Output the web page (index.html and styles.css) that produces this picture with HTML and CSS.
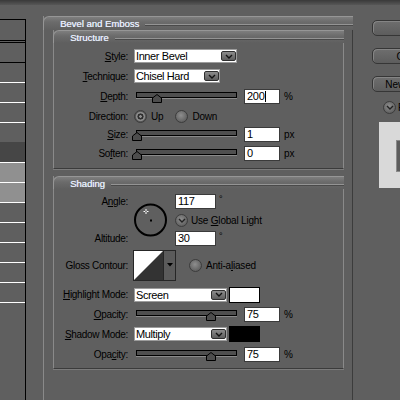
FILE: index.html
```html
<!DOCTYPE html>
<html lang="en">
<head>
    <meta charset="UTF-8">
    <title>Layer Style</title>
    <link rel="stylesheet" href="styles.css">
</head>
<body>
    <div class="topbar"></div>
    <div class="workspace">
        <ul class="layers">
            <li class="first"></li>
            <li class="dark"></li>
            <li></li>
            <li></li>
            <li></li>
            <li class="pre"></li>
            <li class="active"></li>
            <li class="picked"></li>
            <li class="picked"></li>
            <li></li>
            <li></li>
            <li></li>
            <li></li>
            <li></li>
        </ul>

        <div class="dialog">
            <section class="group outer">
                <div class="group-head"><span>Bevel and Emboss</span></div>
                <div class="group-body">

                    <section class="group">
                        <div class="group-head"><span>Structure</span></div>
                        <div class="form structure-form">
                            <label class="lbl"><u>S</u>tyle:</label>
                            <div class="ctl">
                                <div class="select long">Inner Bevel
                                    <span class="drop"><svg width="8" height="5" viewBox="0 0 8 5"><polyline points="1,1 4,4 7,1" fill="none" stroke="#111" stroke-width="1.4"/></svg></span>
                                </div>
                            </div>

                            <label class="lbl"><u>T</u>echnique:</label>
                            <div class="ctl">
                                <div class="select short">Chisel Hard
                                    <span class="drop"><svg width="8" height="5" viewBox="0 0 8 5"><polyline points="1,1 4,4 7,1" fill="none" stroke="#111" stroke-width="1.4"/></svg></span>
                                </div>
                            </div>

                            <label class="lbl"><u>D</u>epth:</label>
                            <div class="ctl">
                                <div class="slider"><svg class="thumb" style="left: 20%" width="10" height="9" viewBox="0 0 10 9"><polygon points="5,0.5 9.5,4 9.5,8.5 0.5,8.5 0.5,4" fill="#4d4d4d" stroke="#000"/></svg></div>
                                <div class="num">200<span class="caret"></span></div>
                                <span class="unit">%</span>
                            </div>

                            <label class="lbl">Direction:</label>
                            <div class="ctl">
                                <span class="radio on"></span><span class="opt">Up</span>
                                <span class="radio"></span><span class="opt">Down</span>
                            </div>

                            <label class="lbl"><u>S</u>ize:</label>
                            <div class="ctl">
                                <div class="slider"><svg class="thumb" style="left: 0.4%" width="10" height="9" viewBox="0 0 10 9"><polygon points="5,0.5 9.5,4 9.5,8.5 0.5,8.5 0.5,4" fill="#4d4d4d" stroke="#000"/></svg></div>
                                <div class="num">1</div>
                                <span class="unit">px</span>
                            </div>

                            <label class="lbl">So<u>f</u>ten:</label>
                            <div class="ctl">
                                <div class="slider"><svg class="thumb" style="left: 0%" width="10" height="9" viewBox="0 0 10 9"><polygon points="5,0.5 9.5,4 9.5,8.5 0.5,8.5 0.5,4" fill="#4d4d4d" stroke="#000"/></svg></div>
                                <div class="num">0</div>
                                <span class="unit">px</span>
                            </div>
                        </div>
                    </section>

                    <section class="group shading">
                        <div class="group-head"><span>Shading</span></div>

                        <div class="angle">
                            <div class="stack labels">
                                <label class="lbl">A<u>n</u>gle:</label>
                                <span></span>
                                <label class="lbl">Altitude:</label>
                            </div>
                            <svg class="dial" width="35" height="36" viewBox="0 0 35 36">
                                <circle cx="17.5" cy="18" r="15.5" fill="none" stroke="#000" stroke-width="2"/>
                                <rect x="17" y="17.5" width="2" height="2" fill="#000"/>
                                <path d="M10.5 9.5h5M13 7v5" stroke="#fff" stroke-width="1"/>
                                <rect x="12.5" y="9" width="1" height="1" fill="#000"/>
                            </svg>
                            <div class="stack">
                                <div class="ctl"><div class="num wide">117</div><span class="deg">°</span></div>
                                <div class="ctl"><span class="check"><svg width="8" height="5" viewBox="0 0 8 5"><polyline points="1,1 4,4 7,1" fill="none" stroke="#222" stroke-width="1.4"/></svg></span><span class="opt">Use <u>G</u>lobal Light</span></div>
                                <div class="ctl"><div class="num wide">30</div><span class="deg">°</span></div>
                            </div>
                        </div>

                        <div class="form shading-form">
                            <label class="lbl">Gloss Contour:</label>
                            <div class="ctl">
                                <div class="contour">
                                    <svg width="29" height="29" viewBox="0 0 29 29">
                                        <rect width="29" height="29" fill="#333"/>
                                        <polygon points="0,0 29,0 0,29" fill="#fff"/>
                                    </svg>
                                    <span class="contour-arrow"><svg width="6" height="4" viewBox="0 0 6 4"><polygon points="0,0 6,0 3,3.5" fill="#000"/></svg></span>
                                </div>
                                <span class="check anti"></span><span class="opt">Anti-a<u>l</u>iased</span>
                            </div>

                            <label class="lbl"><u>H</u>ighlight Mode:</label>
                            <div class="ctl">
                                <div class="select mode">Screen
                                    <span class="drop"><svg width="8" height="5" viewBox="0 0 8 5"><polyline points="1,1 4,4 7,1" fill="none" stroke="#111" stroke-width="1.4"/></svg></span>
                                </div>
                                <span class="swatch light"></span>
                            </div>

                            <label class="lbl"><u>O</u>pacity:</label>
                            <div class="ctl">
                                <div class="slider"><svg class="thumb" style="left: 75%" width="10" height="9" viewBox="0 0 10 9"><polygon points="5,0.5 9.5,4 9.5,8.5 0.5,8.5 0.5,4" fill="#4d4d4d" stroke="#000"/></svg></div>
                                <div class="num">75</div>
                                <span class="unit">%</span>
                            </div>

                            <label class="lbl"><u>S</u>hadow Mode:</label>
                            <div class="ctl">
                                <div class="select mode">Multiply
                                    <span class="drop"><svg width="8" height="5" viewBox="0 0 8 5"><polyline points="1,1 4,4 7,1" fill="none" stroke="#111" stroke-width="1.4"/></svg></span>
                                </div>
                                <span class="swatch dark"></span>
                            </div>

                            <label class="lbl">Opa<u>c</u>ity:</label>
                            <div class="ctl">
                                <div class="slider"><svg class="thumb" style="left: 75%" width="10" height="9" viewBox="0 0 10 9"><polygon points="5,0.5 9.5,4 9.5,8.5 0.5,8.5 0.5,4" fill="#4d4d4d" stroke="#000"/></svg></div>
                                <div class="num">75</div>
                                <span class="unit">%</span>
                            </div>
                        </div>
                    </section>

                </div>
            </section>
        </div>

        <div class="actions">
            <button class="btn">OK</button>
            <button class="btn">Cancel</button>
            <button class="btn">New Style...</button>
            <label class="check-row"><span class="check"><svg width="8" height="5" viewBox="0 0 8 5"><polyline points="1,1 4,4 7,1" fill="none" stroke="#222" stroke-width="1.4"/></svg></span>Preview</label>
            <div class="preview"><div class="preview-swatch"></div></div>
        </div>
    </div>
</body>
</html>
```

FILE: styles.css
```css
* {
    box-sizing: border-box;
}

body {
    margin: 0;
    width: 400px;
    height: 400px;
    overflow: hidden;
    background: #5f5f5f;
    font-family: "Liberation Sans", Arial, sans-serif;
    font-size: 10px;
    color: #000;
}

u {
    text-underline-offset: 1px;
}

.topbar {
    height: 5px;
    background: linear-gradient(#393939, #4b4b4b 60%, #565656);
}

.workspace {
    display: flex;
    align-items: flex-start;
}

.workspace > * {
    flex: none;
}

/* layer list on the left */
.layers {
    list-style: none;
    margin: 14px 0 0;
    padding: 0;
    width: 26px;
    height: 381px;
    border-top: 1px solid #000;
    border-right: 1px solid #000;
}

.layers li {
    height: 20px;
    border-bottom: 1px solid #fff;
}

.layers li.first {
    height: 23px;
    border-bottom: 3px double #000;
}

.layers li.dark {
    border-bottom-color: #000;
}

.layers li.pre {
    border-bottom-color: #464646;
}

.layers li.active {
    background: #464646;
}

.layers li.picked {
    background: #909090;
}

/* dialog groups */
.dialog {
    width: 310px;
    margin: 11px 0 0 17px;
}

.group {
    border-left: 1px solid #8a8a8a;
    border-right: 1px solid #8a8a8a;
    border-bottom: 1px solid #3b3b3b;
    box-shadow: 0 1px 0 #7b7b7b;
}

.outer {
    height: 384px;
    border-right-color: #3c3c3c;
    border-bottom: none;
    box-shadow: none;
}

.group-head {
    display: flex;
    align-items: center;
    height: 13px;
    margin: 0 -1px;
    padding-left: 16px;
    border-top: 1px solid #969696;
    border-left: 1px solid #969696;
    border-top-left-radius: 6px;
    background: linear-gradient(#7e7e7e, #6b6b6b 5px, #5f5f5f);
}

.outer > .group-head {
    height: 14px;
}

.group-head span {
    font-size: 9.5px;
    letter-spacing: 0;
    color: #eaf0fb;
    text-shadow: 0.4px 0 0 #c9d6ea;
}

.group-head::after {
    content: "";
    flex: 1;
    height: 1px;
    margin: 2px 0 0 6px;
    background: #949494;
    box-shadow: 0 1px 0 #4a4a4a;
}

.group-body {
    padding: 0 8px 0 9px;
}

.shading {
    margin-top: 7px;
}

/* form rows */
.form {
    display: grid;
    grid-template-columns: 74px 1fr;
    column-gap: 6px;
    align-items: center;
}

.structure-form {
    padding: 3px 0 4px;
    grid-template-rows: 20px 20px 20px 20px 16px 22px;
}

.shading-form {
    padding: 0 0 4px;
    grid-template-rows: 36px 23px 17px 22px 19px;
}

.lbl {
    text-align: right;
    letter-spacing: -0.3px;
    white-space: nowrap;
}

.ctl {
    display: flex;
    align-items: center;
}

.angle {
    display: flex;
    padding-top: 3px;
}

.stack {
    display: grid;
    grid-template-rows: 19px 18px 18px;
    align-items: center;
}

.labels {
    width: 74px;
}

.dial {
    align-self: center;
    margin: 0 7px 0 5px;
}

.select {
    display: flex;
    align-items: center;
    height: 14px;
    padding-left: 1px;
    background: #fff;
    border: 1px solid #9c9c9c;
    font-size: 11px;
    letter-spacing: -0.4px;
    white-space: nowrap;
}

.select.long {
    width: 103px;
}

.select.short {
    width: 86px;
}

.select.mode {
    width: 93px;
}

.drop {
    display: flex;
    align-items: center;
    justify-content: center;
    margin-left: auto;
    width: 15px;
    height: 10px;
    border: 1px solid #2f2f2f;
    border-radius: 2px;
    background: linear-gradient(#8c8c8c, #5e5e5e);
}

.slider {
    position: relative;
    width: 101px;
    height: 6px;
    margin: 0 7px 3px 2px;
    border: 1px solid #000;
    background: #4f4f4f;
    box-shadow: 0 1px 0 #8a8a8a;
}

.thumb {
    position: absolute;
    top: 1px;
    margin-left: -5px;
}

.num {
    width: 36px;
    height: 15px;
    padding-left: 2px;
    border: 1px solid #3a3a3a;
    background: #fff;
    font-size: 11px;
    line-height: 13px;
    letter-spacing: -0.3px;
}

.num.wide {
    width: 41px;
}

.caret {
    display: inline-block;
    width: 1px;
    height: 11px;
    margin-left: 1px;
    vertical-align: -2px;
    background: #000;
}

.unit {
    margin-left: 4px;
}

.deg {
    align-self: flex-start;
    margin: 0 0 0 3px;
    font-size: 9px;
}

.radio,
.check {
    display: flex;
    align-items: center;
    justify-content: center;
    flex: none;
    width: 13px;
    height: 13px;
    border-radius: 50%;
    border: 1px solid #3c3c3c;
    background: radial-gradient(circle at 45% 40%, #8e8e8e, #6c6c6c 55%, #4f4f4f);
}

.radio.on {
    background: radial-gradient(circle, #8f8f8f 0 1px, #2e2e2e 1.6px 2.8px, #8a8a8a 3.3px 4.2px, #5a5a5a 5px);
}

.opt {
    margin: 0 12px 0 4px;
    letter-spacing: -0.2px;
    white-space: nowrap;
}

.check + .opt {
    margin-left: 3px;
}

.anti {
    margin-left: 13px;
}

.check.anti + .opt {
    margin-left: 4px;
}

.contour {
    display: flex;
    width: 43px;
    height: 31px;
    margin-left: -1px;
    border: 1px solid #262626;
    background: #5b5b5b;
}

.contour-arrow {
    flex: 1;
    display: flex;
    align-items: center;
    justify-content: center;
    border-left: 1px solid #262626;
}

.swatch {
    width: 31px;
    height: 16px;
    margin-left: 2px;
    border: 1px solid #000;
}

.swatch.light {
    background: #fff;
}

.swatch.dark {
    background: #000;
}

/* buttons on the right */
.actions {
    width: 80px;
    margin: 15px 0 0 19px;
}

.btn {
    display: block;
    width: 80px;
    height: 16px;
    padding: 0;
    border: 1px solid #363636;
    border-radius: 5px;
    background: linear-gradient(#6e6e6e, #5d5d5d);
    box-shadow: inset 1px 1px 0 #858585;
    font: 10px "Liberation Sans", Arial, sans-serif;
    color: #000;
}

.btn + .btn {
    margin-top: 12px;
}

.check-row {
    display: flex;
    align-items: center;
    gap: 2px;
    height: 13px;
    margin-top: 9px;
    padding-left: 11px;
}

.preview {
    width: 60px;
    height: 66px;
    margin: 8px 0 0 7px;
    padding: 18px 0 0 17px;
    background: #d9d9d9;
}

.preview-swatch {
    width: 32px;
    height: 32px;
    border: 1px solid #8a8a8a;
    background: #5c5c5c;
}
```
